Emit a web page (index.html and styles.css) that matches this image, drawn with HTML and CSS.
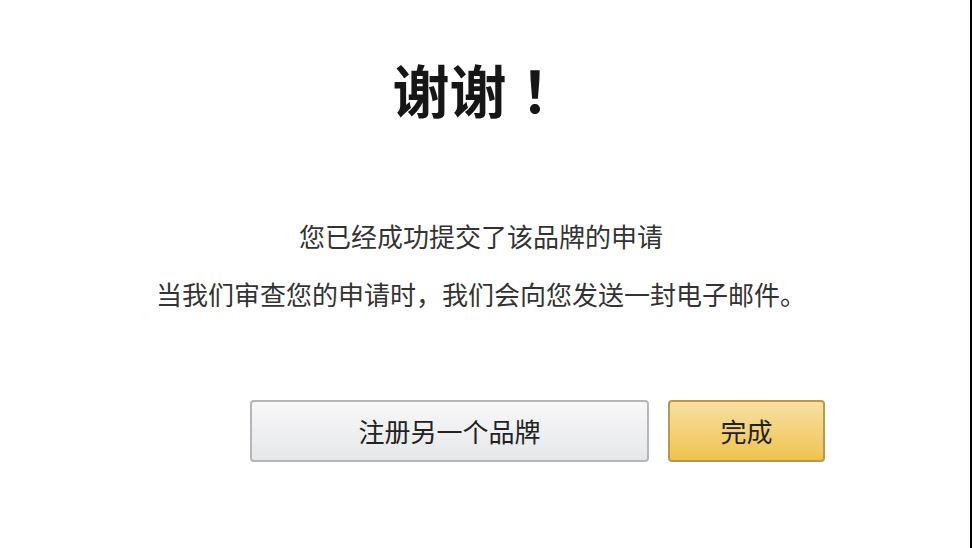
FILE: index.html
```html
<!DOCTYPE html>
<html lang="zh-CN">
<head>
<meta charset="utf-8">
<title>谢谢！</title>
<link rel="stylesheet" href="styles.css">
</head>
<body>
<main class="page">
  <h1 class="title">谢谢<span class="bang">！</span></h1>
  <p class="msg msg-first">您已经成功提交了该品牌的申请</p>
  <p class="msg msg-second">当我们审查您的申请时，我们会向您发送一封电子邮件。</p>
  <div class="actions">
    <button class="btn btn-secondary" type="button">注册另一个品牌</button>
    <button class="btn btn-primary" type="button">完成</button>
  </div>
</main>
</body>
</html>
```

FILE: styles.css
```css
html, body {
  margin: 0;
  padding: 0;
  background: #ffffff;
}
body {
  width: 972px;
  height: 548px;
  box-sizing: border-box;
  border-right: 2px solid #000;
  overflow: hidden;
  font-family: "Noto Sans CJK SC", "Noto Sans", sans-serif;
  text-spacing-trim: space-all;
}
.page {
  display: flex;
  flex-direction: column;
  padding: 60px 8px 0 0;
}
.title {
  margin: 0;
  padding-right: 6px;
  text-align: center;
  font-size: 57px;
  line-height: 57px;
  font-weight: 700;
  color: #161616;
}
.bang {
  display: inline-block;
  width: 57px;
  text-align: center;
  font-family: "Noto Sans CJK JP", "Noto Sans CJK SC", sans-serif;
  text-spacing-trim: space-all;
}
.msg {
  margin: 0;
  text-align: center;
  font-size: 26px;
  line-height: 26px;
  color: #333;
}
.msg-first {
  margin-top: 106px;
}
.msg-second {
  margin-top: 32px;
}
.actions {
  display: flex;
  gap: 19px;
  margin-top: 93px;
  padding-left: 250px;
}
.btn {
  height: 62px;
  box-sizing: border-box;
  border-radius: 4px;
  font-family: "Noto Sans CJK SC", "Noto Sans", sans-serif;
  font-size: 26px;
  line-height: 1;
  color: #222;
  padding: 0;
  cursor: pointer;
}
.btn-secondary {
  width: 399px;
  border: 2px solid #b4b6ba;
  background: linear-gradient(#f8f8f9, #e6e7e9);
}
.btn-primary {
  width: 157px;
  border: 2px solid #b89a4e;
  background: linear-gradient(#f8e0a4, #f0c24f);
}
```
